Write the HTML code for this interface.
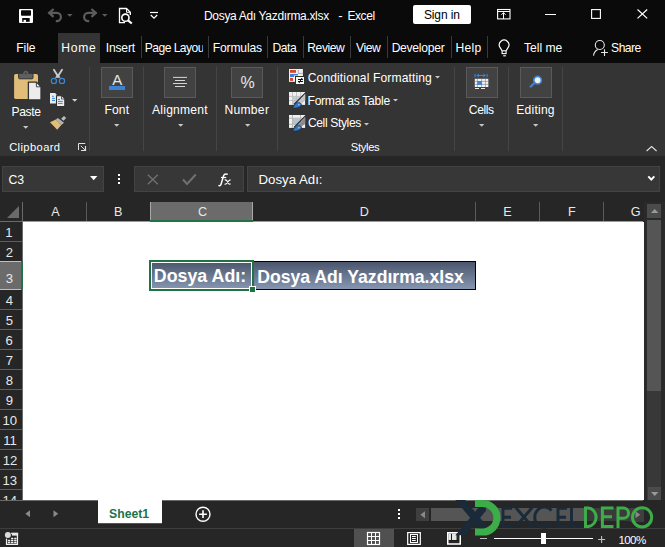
<!DOCTYPE html>
<html><head><meta charset="utf-8"><style>*{margin:0;padding:0;box-sizing:border-box}
html,body{width:665px;height:547px;overflow:hidden;background:#262626;font-family:"Liberation Sans",sans-serif;color:#fff;position:relative}
.a{position:absolute}
.t{position:absolute;white-space:nowrap}
svg{overflow:visible}
</style></head><body>
<div class="a" style="left:0px;top:0px;width:665px;height:63px;background:#0a0a0a;"></div>
<div class="a" style="left:0px;top:63px;width:665px;height:93px;background:#343434;"></div>
<div class="a" style="left:0px;top:156px;width:665px;height:391px;background:#262626;"></div>
<svg class="a" style="left:19px;top:9px;" width="14" height="14" viewBox="0 0 14 14"><rect x="0" y="0" width="14" height="14" rx="1" fill="#fff"/><rect x="2" y="1.2" width="10" height="5.5" rx="0.8" fill="#0a0a0a"/><rect x="3.2" y="9" width="7.5" height="3.8" fill="#0a0a0a"/><rect x="4.6" y="10.9" width="2.4" height="2" fill="#fff"/></svg>
<svg class="a" style="left:44px;top:6px;" width="20" height="18" viewBox="0 0 20 18"><path d="M4.6 6.9 H12.8 A4.1 4.1 0 0 1 12.8 15.1 H11.8" fill="none" stroke="#5c5c5c" stroke-width="2.2"/><path d="M9.6 3 L5.2 6.9 L9.6 10.8" fill="none" stroke="#5c5c5c" stroke-width="2.3"/></svg>
<svg class="a" style="left:66.70px;top:14.3px" width="5.6" height="2.8" viewBox="0 0 5.6 2.8"><path d="M0 0 L5.6 0 L2.8 2.8 Z" fill="#5c5c5c"/></svg>
<svg class="a" style="left:79px;top:6px;" width="22" height="18" viewBox="0 0 22 18"><g transform="translate(22,0) scale(-1,1)"><path d="M4.6 6.9 H12.8 A4.1 4.1 0 0 1 12.8 15.1 H11.8" fill="none" stroke="#5c5c5c" stroke-width="2.2"/><path d="M9.6 3 L5.2 6.9 L9.6 10.8" fill="none" stroke="#5c5c5c" stroke-width="2.3"/></g></svg>
<svg class="a" style="left:101.70px;top:14.3px" width="5.6" height="2.8" viewBox="0 0 5.6 2.8"><path d="M0 0 L5.6 0 L2.8 2.8 Z" fill="#5c5c5c"/></svg>
<svg class="a" style="left:118px;top:7px;" width="16" height="17" viewBox="0 0 16 17"><path d="M7 15.7 H1.5 V1.5 H8.5 L12.3 5.3 V8" fill="none" stroke="#fff" stroke-width="1.3"/><path d="M8.5 1.5 V5.3 H12.3" fill="none" stroke="#fff" stroke-width="1"/><circle cx="7.4" cy="10.7" r="3.6" fill="#0a0a0a" stroke="#fff" stroke-width="1.6"/><path d="M10 13.3 L13.8 16.5" stroke="#fff" stroke-width="2.2"/></svg>
<svg class="a" style="left:149px;top:11px;" width="10" height="9" viewBox="0 0 10 9"><path d="M1 1.5 H9" stroke="#fff" stroke-width="1.2"/><path d="M1.8 4 L5 7.2 L8.2 4" fill="none" stroke="#fff" stroke-width="1.2"/></svg>
<div class="t" style="left:204.04px;top:9.74px;font-size:12px;line-height:12px;color:#fff;font-weight:normal;letter-spacing:-0.326px;">Dosya Adı Yazdırma.xlsx</div>
<div class="t" style="left:338.17px;top:8.73px;font-size:13.2px;line-height:13.2px;color:#fff;font-weight:normal;">-</div>
<div class="t" style="left:347.44px;top:9.74px;font-size:12px;line-height:12px;color:#fff;font-weight:normal;letter-spacing:-0.409px;">Excel</div>
<div class="a" style="left:413px;top:5px;width:58px;height:19px;background:#fff;border-radius:2px"></div>
<div class="t" style="left:423.92px;top:9.04px;font-size:12px;line-height:12px;color:#000;font-weight:normal;letter-spacing:-0.106px;">Sign in</div>
<svg class="a" style="left:497px;top:9px;" width="14" height="11" viewBox="0 0 14 11"><rect x="0.6" y="0.5" width="12.4" height="9.4" fill="none" stroke="#fff" stroke-width="1.1"/><path d="M0.6 2.5 H13" stroke="#fff" stroke-width="1"/><path d="M6.5 3.5 V10" stroke="#fff" stroke-width="1"/><path d="M4.4 5.8 L6.5 3.7 L8.6 5.8" fill="none" stroke="#fff" stroke-width="1"/></svg>
<div class="a" style="left:545px;top:13.5px;width:10.5px;height:1.1px;background:#fff;"></div>
<svg class="a" style="left:591px;top:9px;" width="10" height="10" viewBox="0 0 10 10"><rect x="0.6" y="0.6" width="8.8" height="8.8" fill="none" stroke="#fff" stroke-width="1.1"/></svg>
<svg class="a" style="left:637px;top:9px;" width="11" height="10" viewBox="0 0 11 10"><path d="M0.5 0.5 L10.2 9.4 M10.2 0.5 L0.5 9.4" stroke="#fff" stroke-width="1.2"/></svg>
<div class="a" style="left:58px;top:33px;width:42px;height:30px;background:#343434;"></div>
<div class="t" style="left:16.23px;top:42.46px;font-size:12.1px;line-height:12.1px;color:#fff;font-weight:normal;letter-spacing:-0.064px;">File</div>
<div class="t" style="left:61.33px;top:42.46px;font-size:12.1px;line-height:12.1px;color:#fff;font-weight:normal;letter-spacing:0.743px;">Home</div>
<div class="t" style="left:105.71px;top:42.46px;font-size:12.1px;line-height:12.1px;color:#fff;font-weight:normal;letter-spacing:-0.160px;">Insert</div>
<div class="t" style="left:212.73px;top:42.46px;font-size:12.1px;line-height:12.1px;color:#fff;font-weight:normal;letter-spacing:-0.142px;">Formulas</div>
<div class="t" style="left:272.43px;top:42.46px;font-size:12.1px;line-height:12.1px;color:#fff;font-weight:normal;letter-spacing:-0.446px;">Data</div>
<div class="t" style="left:307.33px;top:42.46px;font-size:12.1px;line-height:12.1px;color:#fff;font-weight:normal;letter-spacing:-0.440px;">Review</div>
<div class="t" style="left:356.00px;top:42.46px;font-size:12.1px;line-height:12.1px;color:#fff;font-weight:normal;letter-spacing:-0.434px;">View</div>
<div class="t" style="left:391.63px;top:42.46px;font-size:12.1px;line-height:12.1px;color:#fff;font-weight:normal;letter-spacing:-0.253px;">Developer</div>
<div class="t" style="left:455.43px;top:42.46px;font-size:12.1px;line-height:12.1px;color:#fff;font-weight:normal;letter-spacing:0.273px;">Help</div>
<div class="t" style="left:523.96px;top:42.46px;font-size:12.1px;line-height:12.1px;color:#fff;font-weight:normal;letter-spacing:-0.008px;">Tell me</div>
<div class="t" style="left:611.12px;top:42.46px;font-size:12.1px;line-height:12.1px;color:#fff;font-weight:normal;letter-spacing:-0.542px;">Share</div>
<div class="a" style="left:145px;top:36px;width:58px;height:22px;overflow:hidden"><div class="t" style="left:-0.17px;top:6.46px;font-size:12.1px;line-height:12.1px;color:#fff;font-weight:normal;letter-spacing:-0.551px;">Page Layout</div>
</div><div class="a" style="left:140.6px;top:36px;width:1px;height:22px;background:#3a3a3a;"></div>
<div class="a" style="left:207.9px;top:36px;width:1px;height:22px;background:#3a3a3a;"></div>
<div class="a" style="left:267.4px;top:36px;width:1px;height:22px;background:#3a3a3a;"></div>
<div class="a" style="left:303px;top:36px;width:1px;height:22px;background:#3a3a3a;"></div>
<div class="a" style="left:350.4px;top:36px;width:1px;height:22px;background:#3a3a3a;"></div>
<div class="a" style="left:386.6px;top:36px;width:1px;height:22px;background:#3a3a3a;"></div>
<div class="a" style="left:450.6px;top:36px;width:1px;height:22px;background:#3a3a3a;"></div>
<div class="a" style="left:486.7px;top:36px;width:1px;height:22px;background:#3a3a3a;"></div>
<svg class="a" style="left:498px;top:39px;" width="13" height="18" viewBox="0 0 13 18"><path d="M4 11.6 L2 8.4 A4.8 4.8 0 1 1 10.2 8.4 L8.2 11.6" fill="none" stroke="#fff" stroke-width="1.15"/><rect x="4.1" y="11.8" width="4" height="2.8" fill="none" stroke="#fff" stroke-width="1.1"/><path d="M5.2 16.8 H7.9" stroke="#fff" stroke-width="1.1"/></svg>
<svg class="a" style="left:588px;top:36px;" width="24" height="24" viewBox="0 0 24 24"><circle cx="11.8" cy="9" r="4.5" fill="none" stroke="#e8e8e8" stroke-width="1.1"/><path d="M5.5 19.6 Q6.2 15.2 9.8 13.6" fill="none" stroke="#e8e8e8" stroke-width="1.1"/><path d="M16.5 13.2 V20 M13.1 16.5 H19.9" stroke="#e8e8e8" stroke-width="1.1"/></svg>
<svg class="a" style="left:10px;top:66px;" width="36" height="36" viewBox="0 0 36 36"><rect x="4.1" y="7.9" width="23.9" height="25" rx="1.6" fill="#e0bd78"/><rect x="8.6" y="7.3" width="14.4" height="5.5" rx="1" fill="#5f5f5f" stroke="#313131" stroke-width="1"/><circle cx="15.8" cy="7.3" r="2.5" fill="#5f5f5f"/><circle cx="15.8" cy="7.3" r="0.9" fill="#313131"/><path d="M18.4 16.2 H26.5 L31 20.7 V34 H18.4 Z" fill="#ececec" stroke="#313131" stroke-width="1.3"/><path d="M26.4 16.6 V20.8 H30.6 Z" fill="#fafafa" stroke="#313131" stroke-width="0.9"/></svg>
<svg class="a" style="left:46px;top:64px;" width="24" height="24" viewBox="0 0 24 24"><path d="M7.9 5.7 L12.1 12.6 M16 5.7 L11.8 12.6" stroke="#c8c8c8" stroke-width="1.9" stroke-linecap="round"/><path d="M9 13.7 H14.6 L12.8 11 H10.8 Z" fill="#c8c8c8"/><circle cx="7.9" cy="16.9" r="2.6" fill="none" stroke="#3b8ad9" stroke-width="1.15"/><circle cx="16" cy="16.9" r="2.6" fill="none" stroke="#3b8ad9" stroke-width="1.15"/></svg>
<svg class="a" style="left:46px;top:88px;" width="24" height="24" viewBox="0 0 24 24"><path d="M4 5 H9 L10.6 6.6 V15.6 H4 Z" fill="#ececec"/><path d="M6 8.3 H7.8 M6 10.4 H9 M6 12.5 H9" stroke="#3b83d6" stroke-width="1"/><path d="M10.5 7.8 H15.5 L18.8 11.1 V18.6 H10.5 Z" fill="#ececec" stroke="#313131" stroke-width="1.1"/><path d="M15.5 8.3 V11 H18.3" fill="#fff" stroke="#313131" stroke-width="0.8"/><path d="M12 11.5 H14 M12 13.4 H16.7 M12 15.4 H16.7" stroke="#3b83d6" stroke-width="1"/></svg>
<svg class="a" style="left:71.90px;top:99.3px" width="5.4" height="2.7" viewBox="0 0 5.4 2.7"><path d="M0 0 L5.4 0 L2.7 2.7 Z" fill="#cfcfcf"/></svg>
<svg class="a" style="left:46px;top:110px;" width="24" height="24" viewBox="0 0 24 24"><path d="M4 12.3 L9.9 9.6 L15.3 15 L11.2 19.7 Z" fill="#e0bd78"/><path d="M9.9 9.4 L11.8 7.9 L18 12.7 L15.4 14.9 Z" fill="#b4b4b4"/><path d="M15.1 8.8 L18 5.9 L20.2 8.1 L17.5 10.7 Z" fill="#bcbcbc"/></svg>
<div class="t" style="left:11.43px;top:106.06px;font-size:12.1px;line-height:12.1px;color:#fff;font-weight:normal;letter-spacing:-0.359px;">Paste</div>
<svg class="a" style="left:23.10px;top:126px" width="5.4" height="2.8" viewBox="0 0 5.4 2.8"><path d="M0 0 L5.4 0 L2.7 2.8 Z" fill="#c8c8c8"/></svg>
<div class="t" style="left:9.14px;top:141.62px;font-size:11.2px;line-height:11.2px;color:#fff;font-weight:normal;letter-spacing:0.381px;">Clipboard</div>
<svg class="a" style="left:78px;top:143px;" width="9" height="9" viewBox="0 0 9 9"><path d="M0.5 7 V0.5 H7.2" fill="none" stroke="#e0e0e0" stroke-width="1"/><path d="M2.8 2.8 L7 7" stroke="#e0e0e0" stroke-width="1"/><path d="M3 7.5 H7.5 V3" fill="none" stroke="#e0e0e0" stroke-width="1.2"/></svg>
<div class="a" style="left:89px;top:67px;width:1px;height:84px;background:#454545;"></div>
<div class="a" style="left:143px;top:67px;width:1px;height:84px;background:#454545;"></div>
<div class="a" style="left:216px;top:67px;width:1px;height:84px;background:#454545;"></div>
<div class="a" style="left:277px;top:67px;width:1px;height:84px;background:#454545;"></div>
<div class="a" style="left:454px;top:67px;width:1px;height:84px;background:#454545;"></div>
<div class="a" style="left:508px;top:67px;width:1px;height:84px;background:#454545;"></div>
<div class="a" style="left:562px;top:67px;width:1px;height:84px;background:#454545;"></div>
<div class="a" style="left:101px;top:67px;width:32px;height:31px;background:#424242;border:1px solid #5a5a5a"></div>
<div class="a" style="left:164px;top:67px;width:32px;height:31px;background:#424242;border:1px solid #5a5a5a"></div>
<div class="a" style="left:231px;top:67px;width:32px;height:31px;background:#424242;border:1px solid #5a5a5a"></div>
<div class="a" style="left:466px;top:67px;width:32px;height:31px;background:#424242;border:1px solid #5a5a5a"></div>
<div class="a" style="left:520px;top:67px;width:32px;height:31px;background:#424242;border:1px solid #5a5a5a"></div>
<div class="t" style="left:112.20px;top:72.00px;font-size:15px;line-height:15px;color:#e6e6e6;font-weight:normal;">A</div>
<div class="a" style="left:109px;top:86px;width:16.3px;height:3.9px;background:#3c83d0;"></div>
<div class="t" style="left:104.43px;top:104.06px;font-size:12.1px;line-height:12.1px;color:#fff;font-weight:normal;letter-spacing:0.143px;">Font</div>
<svg class="a" style="left:113.70px;top:124px" width="5.4" height="2.7" viewBox="0 0 5.4 2.7"><path d="M0 0 L5.4 0 L2.7 2.7 Z" fill="#c8c8c8"/></svg>
<svg class="a" style="left:172px;top:76px;" width="16" height="12" viewBox="0 0 16 12"><path d="M1 1.4 H15 M3 4.5 H13 M1 7.5 H15 M3 10.5 H13" stroke="#d6d6d6" stroke-width="1"/></svg>
<div class="t" style="left:152.00px;top:104.06px;font-size:12.1px;line-height:12.1px;color:#fff;font-weight:normal;letter-spacing:0.233px;">Alignment</div>
<svg class="a" style="left:178.10px;top:124px" width="5.4" height="2.7" viewBox="0 0 5.4 2.7"><path d="M0 0 L5.4 0 L2.7 2.7 Z" fill="#c8c8c8"/></svg>
<div class="t" style="left:240.42px;top:74.96px;font-size:16px;line-height:16px;color:#e6e6e6;font-weight:normal;">%</div>
<div class="t" style="left:224.43px;top:104.06px;font-size:12.1px;line-height:12.1px;color:#fff;font-weight:normal;letter-spacing:0.298px;">Number</div>
<svg class="a" style="left:244.80px;top:124px" width="5.4" height="2.7" viewBox="0 0 5.4 2.7"><path d="M0 0 L5.4 0 L2.7 2.7 Z" fill="#c8c8c8"/></svg>
<svg class="a" style="left:284px;top:66px;" width="26" height="22" viewBox="0 0 26 22"><rect x="5" y="3" width="13.9" height="12.9" fill="#f0f0f0"/><rect x="6" y="4" width="6" height="2.8" fill="#d8452c"/><path d="M6 8 H14 V9.6 H10 V10.9 H6 Z" fill="#3b83d6"/><rect x="6" y="12" width="3" height="2.9" fill="#d8452c"/><path d="M14.3 4 V8 M14 7.4 H18.5" stroke="#a8a8a8" stroke-width="0.9"/><rect x="11.5" y="10.5" width="9" height="8" fill="#f6f6f6" stroke="#313131" stroke-width="1"/><path d="M14 13.5 H19 M14 15.5 H19" stroke="#111" stroke-width="1"/><path d="M18 12 L15 17" stroke="#111" stroke-width="1"/></svg>
<div class="t" style="left:307.69px;top:71.86px;font-size:12.1px;line-height:12.1px;color:#fff;font-weight:normal;letter-spacing:0.117px;">Conditional Formatting</div>
<svg class="a" style="left:435.20px;top:76.3px" width="5" height="2.6" viewBox="0 0 5 2.6"><path d="M0 0 L5 0 L2.5 2.6 Z" fill="#c8c8c8"/></svg>
<svg class="a" style="left:284px;top:89px;" width="26" height="22" viewBox="0 0 26 22"><rect x="5" y="3" width="16.1" height="12.9" fill="#f0f0f0"/><rect x="9" y="7.9" width="7.7" height="3.2" fill="#b6cde4"/><rect x="9" y="11.9" width="3.5" height="4" fill="#b6cde4"/><path d="M8.5 3 V15.9 M12.5 3 V15.9 M16.7 3 V15.9 M5 7.4 H21 M5 11.5 H21" stroke="#bdbdbd" stroke-width="0.9"/><path d="M21.5 3.8 L10 15.5" stroke="#262626" stroke-width="1.2"/><path d="M21.2 5 V11.2 L16.6 15.8 L13 14.6 Z" fill="#c4c4c4"/><path d="M8.8 19 C9.6 16.6 11.6 14.2 14.6 13.1 L17.6 15.3 C17.2 17.5 13.6 19.6 8.8 19 Z" fill="#2f7bd0" stroke="#262626" stroke-width="0.6"/><path d="M14.2 14.6 L15.8 15.8 L14.8 16.8" fill="#ddd"/></svg>
<div class="t" style="left:307.53px;top:94.86px;font-size:12.1px;line-height:12.1px;color:#fff;font-weight:normal;letter-spacing:-0.275px;">Format as Table</div>
<svg class="a" style="left:393.10px;top:99.3px" width="5" height="2.6" viewBox="0 0 5 2.6"><path d="M0 0 L5 0 L2.5 2.6 Z" fill="#c8c8c8"/></svg>
<svg class="a" style="left:284px;top:112px;" width="26" height="22" viewBox="0 0 26 22"><rect x="5" y="3" width="16.1" height="12.9" fill="#f0f0f0"/><rect x="9" y="6.7" width="7.5" height="5.6" fill="#b0c4d8"/><path d="M8.5 3 V15.9 M16.5 3 V15.9 M5 6.2 H21 M5 12.3 H21" stroke="#b0b0b0" stroke-width="0.9"/><path d="M21.5 3.8 L10 15.5" stroke="#262626" stroke-width="1.2"/><path d="M21.2 5 V11.2 L16.6 15.8 L13 14.6 Z" fill="#8a8a8a"/><path d="M8.8 19 C9.6 16.6 11.6 14.2 14.6 13.1 L17.6 15.3 C17.2 17.5 13.6 19.6 8.8 19 Z" fill="#2f7bd0" stroke="#262626" stroke-width="0.6"/><path d="M14.2 14.6 L15.8 15.8 L14.8 16.8" fill="#ddd"/></svg>
<div class="t" style="left:307.89px;top:117.46px;font-size:12.1px;line-height:12.1px;color:#fff;font-weight:normal;letter-spacing:-0.369px;">Cell Styles</div>
<svg class="a" style="left:364.00px;top:122.6px" width="5" height="2.6" viewBox="0 0 5 2.6"><path d="M0 0 L5 0 L2.5 2.6 Z" fill="#c8c8c8"/></svg>
<div class="t" style="left:350.75px;top:141.82px;font-size:11.2px;line-height:11.2px;color:#fff;font-weight:normal;letter-spacing:-0.303px;">Styles</div>
<svg class="a" style="left:466px;top:67px;" width="32" height="30" viewBox="0 0 32 30"><rect x="8.5" y="6.9" width="1.1" height="3.3" fill="#3b83d6"/><rect x="20.6" y="6.9" width="1.1" height="3.3" fill="#3b83d6"/><path d="M11.5 8.5 H18.6" stroke="#3b83d6" stroke-width="1.1"/><path d="M10.3 8.5 L12.8 6.6 V10.4 Z M19.9 8.5 L17.4 6.6 V10.4 Z" fill="#3b83d6"/><rect x="8.8" y="11.8" width="13.5" height="8.2" fill="#f4f4f4"/><path d="M11.4 11.8 V20 M15.6 11.8 V20 M19.4 11.8 V20 M8.8 14.4 H22.3 M8.8 17.4 H22.3" stroke="#8a8a8a" stroke-width="0.7"/><rect x="11.3" y="14" width="4.6" height="3.9" fill="#3b83d6"/><path d="M9 21.5 H13 M15 21.5 H19" stroke="#e8e8e8" stroke-width="1"/></svg>
<div class="t" style="left:468.79px;top:104.06px;font-size:12.1px;line-height:12.1px;color:#fff;font-weight:normal;letter-spacing:-0.382px;">Cells</div>
<svg class="a" style="left:479.00px;top:124px" width="5.4" height="2.7" viewBox="0 0 5.4 2.7"><path d="M0 0 L5.4 0 L2.7 2.7 Z" fill="#c8c8c8"/></svg>
<svg class="a" style="left:529px;top:75px;" width="14" height="14" viewBox="0 0 14 14"><path d="M1.6 11.6 L5.2 8.3" stroke="#3b83d6" stroke-width="2.2" stroke-linecap="round"/><circle cx="8.6" cy="5.2" r="3.8" fill="#f0f0f0" stroke="#3b83d6" stroke-width="1.7"/></svg>
<div class="t" style="left:516.33px;top:104.06px;font-size:12.1px;line-height:12.1px;color:#fff;font-weight:normal;letter-spacing:0.208px;">Editing</div>
<svg class="a" style="left:532.60px;top:124px" width="5.4" height="2.7" viewBox="0 0 5.4 2.7"><path d="M0 0 L5.4 0 L2.7 2.7 Z" fill="#c8c8c8"/></svg>
<svg class="a" style="left:646px;top:146px;" width="12" height="6" viewBox="0 0 12 6"><path d="M0.6 5 L5.6 0.6 L10.6 5" fill="none" stroke="#e0e0e0" stroke-width="1.1"/></svg>
<div class="a" style="left:2px;top:166px;width:102px;height:26px;background:#373737;border:1px solid #434343"></div>
<div class="t" style="left:8.49px;top:174.43px;font-size:12.25px;line-height:12.25px;color:#fff;font-weight:normal;">C3</div>
<svg class="a" style="left:89.80px;top:176px" width="7.4" height="4.2" viewBox="0 0 7.4 4.2"><path d="M0 0 L7.4 0 L3.7 4.2 Z" fill="#fff"/></svg>
<div class="a" style="left:118px;top:174px;width:2px;height:2px;background:#fff;"></div>
<div class="a" style="left:118px;top:178px;width:2px;height:2px;background:#fff;"></div>
<div class="a" style="left:118px;top:182px;width:2px;height:2px;background:#fff;"></div>
<div class="a" style="left:134px;top:166px;width:110px;height:26px;background:#373737;border:1px solid #434343"></div>
<svg class="a" style="left:147px;top:174px;" width="12" height="11" viewBox="0 0 12 11"><path d="M0.8 0.8 L10.8 10.2 M10.8 0.8 L0.8 10.2" stroke="#707070" stroke-width="1.4"/></svg>
<svg class="a" style="left:182px;top:173px;" width="15" height="13" viewBox="0 0 15 13"><path d="M1 6.5 L5 11 L13.8 1.5" fill="none" stroke="#707070" stroke-width="2"/></svg>
<svg class="a" style="left:214.3px;top:168.8px;" width="24" height="22" viewBox="0 0 24 22"><path d="M4.4 16.4 Q6.3 17.4 7.1 15 L9.7 6.6 Q10.5 4.3 13.8 5.4" fill="none" stroke="#fff" stroke-width="1.5"/><path d="M7 8.5 H12.2" stroke="#fff" stroke-width="1.2"/><path d="M10.6 11 Q12 10.4 13 12 L14.6 14.6 Q15.4 15.6 16.6 14.8 M16.6 10.8 Q15.6 10.8 14.2 12.4 L12.4 14.6 Q11.6 15.4 10.6 15" fill="none" stroke="#fff" stroke-width="1.2"/></svg>
<div class="a" style="left:247px;top:166px;width:413px;height:26px;background:#373737;border:1px solid #434343"></div>
<div class="t" style="left:258.44px;top:173.28px;font-size:13.25px;line-height:13.25px;color:#fff;font-weight:normal;">Dosya Adı:</div>
<svg class="a" style="left:647px;top:175px;" width="9" height="7" viewBox="0 0 9 7"><path d="M1.3 1.3 L4.3 4.6 L7.3 1.3" fill="none" stroke="#fff" stroke-width="2"/></svg>
<svg class="a" style="left:7px;top:206px;" width="12" height="12" viewBox="0 0 12 12"><path d="M12 0 V12 H0 Z" fill="#6a6a6a"/></svg>
<div class="a" style="left:23px;top:221px;width:620px;height:1px;background:#9a9a9a;"></div>
<div class="a" style="left:0px;top:221px;width:22px;height:1px;background:#6b6b6b;"></div>
<div class="a" style="left:150px;top:202px;width:103px;height:18px;background:#6b6b6b;"></div>
<div class="a" style="left:150px;top:202px;width:1px;height:18px;background:#a8a8a8;"></div>
<div class="a" style="left:252px;top:202px;width:1px;height:18px;background:#a8a8a8;"></div>
<div class="a" style="left:150px;top:220px;width:103px;height:2px;background:#217346;"></div>
<div class="a" style="left:86px;top:202px;width:1px;height:19px;background:#5a5a5a;"></div>
<div class="a" style="left:475px;top:202px;width:1px;height:19px;background:#5a5a5a;"></div>
<div class="a" style="left:539px;top:202px;width:1px;height:19px;background:#5a5a5a;"></div>
<div class="a" style="left:603px;top:202px;width:1px;height:19px;background:#5a5a5a;"></div>
<div class="t" style="left:51.13px;top:205.83px;font-size:12.6px;line-height:12.6px;color:#e8e8e8;font-weight:normal;">A</div>
<div class="t" style="left:114.09px;top:205.83px;font-size:12.6px;line-height:12.6px;color:#e8e8e8;font-weight:normal;">B</div>
<div class="t" style="left:197.89px;top:205.83px;font-size:12.6px;line-height:12.6px;color:#e8e8e8;font-weight:normal;">C</div>
<div class="t" style="left:359.76px;top:205.83px;font-size:12.6px;line-height:12.6px;color:#e8e8e8;font-weight:normal;">D</div>
<div class="t" style="left:503.18px;top:205.83px;font-size:12.6px;line-height:12.6px;color:#e8e8e8;font-weight:normal;">E</div>
<div class="t" style="left:568.09px;top:205.83px;font-size:12.6px;line-height:12.6px;color:#e8e8e8;font-weight:normal;">F</div>
<div class="t" style="left:630.66px;top:205.83px;font-size:12.6px;line-height:12.6px;color:#e8e8e8;font-weight:normal;">G</div>
<div class="a" style="left:22px;top:202px;width:1px;height:298px;background:#6b6b6b;"></div>
<div class="a" style="left:23px;top:222px;width:621px;height:278px;background:#fff;"></div>
<div class="a" style="left:0px;top:262px;width:21px;height:27px;background:#6b6b6b;"></div>
<div class="a" style="left:0px;top:261px;width:21px;height:1px;background:#c0c0c0;"></div>
<div class="a" style="left:0px;top:289px;width:21px;height:1px;background:#c0c0c0;"></div>
<div class="a" style="left:21px;top:261px;width:2px;height:29px;background:#217346;"></div>
<div class="a" style="left:0px;top:241px;width:22px;height:1px;background:#5e5e5e;"></div>
<div class="a" style="left:0px;top:309px;width:22px;height:1px;background:#5e5e5e;"></div>
<div class="a" style="left:0px;top:329px;width:22px;height:1px;background:#5e5e5e;"></div>
<div class="a" style="left:0px;top:349px;width:22px;height:1px;background:#5e5e5e;"></div>
<div class="a" style="left:0px;top:369px;width:22px;height:1px;background:#5e5e5e;"></div>
<div class="a" style="left:0px;top:389px;width:22px;height:1px;background:#5e5e5e;"></div>
<div class="a" style="left:0px;top:409px;width:22px;height:1px;background:#5e5e5e;"></div>
<div class="a" style="left:0px;top:429px;width:22px;height:1px;background:#5e5e5e;"></div>
<div class="a" style="left:0px;top:449px;width:22px;height:1px;background:#5e5e5e;"></div>
<div class="a" style="left:0px;top:469px;width:22px;height:1px;background:#5e5e5e;"></div>
<div class="a" style="left:0px;top:489px;width:22px;height:1px;background:#5e5e5e;"></div>
<div class="t" style="left:5.20px;top:226.39px;font-size:13.12px;line-height:13.12px;color:#e8e8e8;font-weight:normal;">1</div>
<div class="t" style="left:5.63px;top:246.39px;font-size:13.12px;line-height:13.12px;color:#e8e8e8;font-weight:normal;">2</div>
<div class="t" style="left:5.69px;top:272.49px;font-size:13.12px;line-height:13.12px;color:#e8e8e8;font-weight:normal;">3</div>
<div class="t" style="left:5.69px;top:294.39px;font-size:13.12px;line-height:13.12px;color:#e8e8e8;font-weight:normal;">4</div>
<div class="t" style="left:5.63px;top:314.39px;font-size:13.12px;line-height:13.12px;color:#e8e8e8;font-weight:normal;">5</div>
<div class="t" style="left:5.56px;top:334.39px;font-size:13.12px;line-height:13.12px;color:#e8e8e8;font-weight:normal;">6</div>
<div class="t" style="left:5.63px;top:354.39px;font-size:13.12px;line-height:13.12px;color:#e8e8e8;font-weight:normal;">7</div>
<div class="t" style="left:5.63px;top:374.39px;font-size:13.12px;line-height:13.12px;color:#e8e8e8;font-weight:normal;">8</div>
<div class="t" style="left:5.69px;top:394.39px;font-size:13.12px;line-height:13.12px;color:#e8e8e8;font-weight:normal;">9</div>
<div class="t" style="left:2.58px;top:414.39px;font-size:13.12px;line-height:13.12px;color:#e8e8e8;font-weight:normal;">10</div>
<div class="t" style="left:3.13px;top:434.39px;font-size:13.12px;line-height:13.12px;color:#e8e8e8;font-weight:normal;">11</div>
<div class="t" style="left:2.65px;top:454.39px;font-size:13.12px;line-height:13.12px;color:#e8e8e8;font-weight:normal;">12</div>
<div class="t" style="left:2.58px;top:474.39px;font-size:13.12px;line-height:13.12px;color:#e8e8e8;font-weight:normal;">13</div>
<div class="t" style="left:2.52px;top:494.39px;font-size:13.12px;line-height:13.12px;color:#e8e8e8;font-weight:normal;">14</div>
<div class="a" style="left:0px;top:500px;width:22px;height:0px;background:#000;"></div>
<div class="a" style="left:253px;top:261px;width:223px;height:29px;background:#000;"></div>
<div class="a" style="left:254px;top:262px;width:221px;height:27px;background:linear-gradient(#4a566c,#8696b1);"></div>
<div class="a" style="left:149px;top:260px;width:105px;height:31px;background:#217346;"></div>
<div class="a" style="left:151px;top:262px;width:101px;height:27px;background:#fff;"></div>
<div class="a" style="left:152px;top:263px;width:99px;height:25px;background:linear-gradient(#4d596f,#8494af);"></div>
<div class="a" style="left:249px;top:286px;width:7px;height:7px;background:#fff;"></div>
<div class="a" style="left:250px;top:287px;width:5px;height:5px;background:#217346;"></div>
<div class="t" style="left:153.83px;top:268.42px;font-size:17.81px;line-height:17.81px;color:#fff;font-weight:bold;">Dosya Adı:</div>
<div class="t" style="left:257.24px;top:268.59px;font-size:17.61px;line-height:17.61px;color:#fff;font-weight:bold;">Dosya Adı Yazdırma.xlsx</div>
<div class="a" style="left:644px;top:202px;width:21px;height:298px;background:#2a2a2a;"></div>
<div class="a" style="left:647.4px;top:219.6px;width:14px;height:280px;background:#383838;"></div>
<div class="a" style="left:647.4px;top:204.2px;width:14px;height:13.7px;background:#4b4b4b;"></div>
<svg class="a" style="left:650.70px;top:209px" width="7.4" height="4" viewBox="0 0 7.4 4"><path d="M0 4 L3.7 0 L7.4 4 Z" fill="#9a9a9a"/></svg>
<div class="a" style="left:647.4px;top:219.6px;width:14px;height:171.4px;background:#555;"></div>
<div class="a" style="left:647.9px;top:487px;width:13.1px;height:12.8px;background:#4b4b4b;"></div>
<svg class="a" style="left:650.70px;top:492px" width="7.4" height="4" viewBox="0 0 7.4 4"><path d="M0 0 L7.4 0 L3.7 4 Z" fill="#9a9a9a"/></svg>
<div class="a" style="left:0px;top:500px;width:643px;height:28px;background:#262626;"></div>
<div class="a" style="left:0px;top:500px;width:97.5px;height:1.2px;background:#6a6a6a;"></div>
<div class="a" style="left:161.7px;top:500px;width:481.3px;height:1.2px;background:#6a6a6a;"></div>
<svg class="a" style="left:24.5px;top:510px;" width="6" height="8" viewBox="0 0 6 8"><path d="M5 0.3 V7.3 L0.3 3.8 Z" fill="#8a8a8a"/></svg>
<svg class="a" style="left:52.5px;top:510px;" width="6" height="8" viewBox="0 0 6 8"><path d="M0.5 0.3 V7.3 L5.2 3.8 Z" fill="#8a8a8a"/></svg>
<div class="a" style="left:97.5px;top:500px;width:64.2px;height:22.7px;background:#fff;"></div>
<div class="a" style="left:97.5px;top:522.7px;width:64.2px;height:1.8px;background:#217346;"></div>
<div class="t" style="left:109.06px;top:507.76px;font-size:12.22px;line-height:12.22px;color:#217346;font-weight:bold;">Sheet1</div>
<svg class="a" style="left:195px;top:506px;" width="16" height="16" viewBox="0 0 16 16"><circle cx="8" cy="8.2" r="7" fill="none" stroke="#fff" stroke-width="1.4"/><path d="M8 4.3 V12.1 M4.1 8.2 H11.9" stroke="#fff" stroke-width="1.6"/></svg>
<div class="a" style="left:398px;top:508.5px;width:2.2px;height:2.2px;background:#fff;"></div>
<div class="a" style="left:398px;top:512.8px;width:2.2px;height:2.2px;background:#fff;"></div>
<div class="a" style="left:398px;top:516.8px;width:2.2px;height:2.2px;background:#fff;"></div>
<div class="a" style="left:415.8px;top:507.7px;width:13.1px;height:13.6px;background:#3f3f3f;"></div>
<svg class="a" style="left:419.5px;top:510.5px;" width="6" height="8" viewBox="0 0 6 8"><path d="M5 0.3 V7.3 L0.3 3.8 Z" fill="#8a8a8a"/></svg>
<div class="a" style="left:431px;top:507.5px;width:199px;height:13.8px;background:#3a3a3a;"></div>
<div class="a" style="left:431px;top:507.5px;width:153px;height:13.8px;background:#555;"></div>
<div class="a" style="left:630.3px;top:507.8px;width:13.3px;height:13.9px;background:#3f3f3f;"></div>
<svg class="a" style="left:634.5px;top:510.5px;" width="6" height="8" viewBox="0 0 6 8"><path d="M0.5 0.3 V7.3 L5.2 3.8 Z" fill="#8a8a8a"/></svg>
<div class="a" style="left:0px;top:528px;width:665px;height:1px;background:#3e3e3e;"></div>
<svg class="a" style="left:2px;top:529px;" width="20" height="18" viewBox="0 0 20 18"><path d="M4.55 9.5 V15.45 H15.45 V4.45 H9" fill="none" stroke="#eee" stroke-width="1.3"/><rect x="9.9" y="3.9" width="6.2" height="2.7" fill="#e8e8e8"/><rect x="9.0" y="8.85" width="2.4" height="1.3" rx="0.5" fill="#eee"/><rect x="12.100000000000001" y="8.85" width="2.4" height="1.3" rx="0.5" fill="#eee"/><rect x="5.8999999999999995" y="10.85" width="2.4" height="1.3" rx="0.5" fill="#eee"/><rect x="9.0" y="10.85" width="2.4" height="1.3" rx="0.5" fill="#eee"/><rect x="12.100000000000001" y="10.85" width="2.4" height="1.3" rx="0.5" fill="#eee"/><rect x="5.8999999999999995" y="12.85" width="2.4" height="1.3" rx="0.5" fill="#eee"/><rect x="9.0" y="12.85" width="2.4" height="1.3" rx="0.5" fill="#eee"/><rect x="12.100000000000001" y="12.85" width="2.4" height="1.3" rx="0.5" fill="#eee"/><circle cx="5.9" cy="5.9" r="3.5" fill="#262626"/><circle cx="5.9" cy="5.9" r="3" fill="#dcdcdc"/></svg>
<div class="a" style="left:353.8px;top:529px;width:40.1px;height:18px;background:#505050;"></div>
<svg class="a" style="left:366px;top:531px;" width="15" height="15" viewBox="0 0 15 15"><rect x="1.5" y="1.5" width="12" height="12" fill="none" stroke="#fff" stroke-width="1.2"/><path d="M5.5 1.5 V13.5 M9.5 1.5 V13.5 M1.5 5.5 H13.5 M1.5 9.5 H13.5" stroke="#fff" stroke-width="1"/></svg>
<svg class="a" style="left:407px;top:531px;" width="15" height="15" viewBox="0 0 15 15"><rect x="0.7" y="1.6" width="12.6" height="11.8" fill="none" stroke="#fff" stroke-width="1.2"/><rect x="3.5" y="3.5" width="7" height="8" fill="none" stroke="#fff" stroke-width="1"/><path d="M5 5.5 H8.8 M5 7.5 H8.8 M5 9.5 H8.8" stroke="#fff" stroke-width="1"/></svg>
<svg class="a" style="left:447px;top:532px;" width="14" height="13" viewBox="0 0 14 13"><rect x="1.5" y="1.5" width="8" height="6.5" fill="#e6e6e6"/><path d="M4.5 1.5 V8.5" stroke="#1a1a1a" stroke-width="1"/><path d="M1.5 8.5 H12.5" stroke="#1a1a1a" stroke-width="1"/><rect x="0.75" y="0.75" width="12.5" height="11.25" fill="none" stroke="#fff" stroke-width="1.5"/></svg>
<div class="a" style="left:480.1px;top:538.1px;width:6.9px;height:1.1px;background:#c0c0c0;"></div>
<div class="a" style="left:493.6px;top:538.1px;width:99.1px;height:1.1px;background:#fff;"></div>
<div class="a" style="left:540.7px;top:532.9px;width:5.2px;height:11.4px;background:#fff;"></div>
<svg class="a" style="left:597.9px;top:535.7px;" width="8" height="8" viewBox="0 0 8 8"><path d="M3.6 0 V7 M0.1 3.5 H7.1" stroke="#c0c0c0" stroke-width="1.1"/></svg>
<div class="t" style="left:618.49px;top:533.58px;font-size:11.6px;line-height:11.6px;color:#fff;font-weight:normal;letter-spacing:-0.639px;">100%</div>
<svg class="a" style="left:440px;top:495px;" width="225" height="45" viewBox="0 0 225 45"><clipPath id="xc"><rect x="0" y="5" width="46" height="35.6"/></clipPath><path clip-path="url(#xc)" d="M15.2 5 H25.2 L55 40.6 H45 Z M45 5 H55 L25.2 40.6 H15.2 Z" fill="#1b2a38"/><path d="M35 8.55 H42.7 A14.25 14.25 0 0 1 42.7 37.05 H35" fill="none" stroke="#3cae49" stroke-width="7.1"/><g fill="none" stroke="#1b2a38" stroke-width="2.9"><path d="M72.2 13.3 H63 V31.1 H72.2 M63 22.2 H71"/><path d="M75.3 12 L92.6 32.3 M92.6 12 L75.3 32.3"/><path d="M111.5 15.5 A9.6 10 0 1 0 111.5 28.8"/><path d="M127 13.3 H118 V31.1 H127 M118 22.2 H126"/><path d="M131.5 12 V31.1 H140.7"/></g><g fill="none" stroke="#3cae49" stroke-width="3"><path d="M145.5 13.1 H148.5 A8.5 9.2 0 0 1 148.5 31.4 H145.5 Z"/><path d="M173.5 13.1 H162.4 V31.4 H173.5 M162.4 21.8 H172"/><path d="M178 32.9 V13.1 H183.5 A5 5.1 0 0 1 183.5 23.3 H178"/><circle cx="202.1" cy="22.3" r="9.6"/></g></svg>
</body></html>
